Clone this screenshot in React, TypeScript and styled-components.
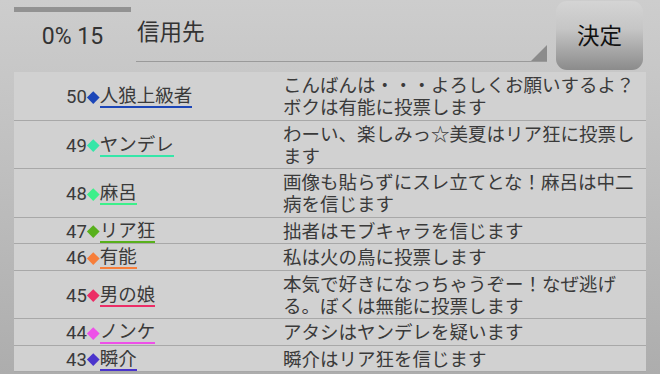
import React from "react";
import styled, { createGlobalStyle } from "styled-components";

const Global = createGlobalStyle`
  html, body {
    margin: 0;
    padding: 0;
    width: 660px;
    height: 374px;
    overflow: hidden;
  }
  body {
    background: linear-gradient(180deg, #cdcdcd 0%, #c4c4c4 30%, #adadad 100%);
    font-family: Roboto, "Noto Sans CJK JP", sans-serif;
    color: #333;
  }
`;

const Page = styled.div`
  width: 660px;
  height: 374px;
  padding: 0 14px;
  box-sizing: border-box;
  display: flex;
  flex-direction: column;
`;

const Header = styled.div`
  height: 72px;
  flex-shrink: 0;
  display: flex;
  align-items: stretch;
`;

const Counter = styled.div`
  width: 117px;
  display: flex;
  flex-direction: column;
  align-items: center;
  padding-top: 7px;
  box-sizing: border-box;
`;

const ProgressTrack = styled.div`
  align-self: stretch;
  height: 5px;
  background: #929292;
`;

const CounterText = styled.div`
  margin-top: 11px;
  font-size: 23px;
  line-height: 28px;
  color: #333;
`;

const InputBox = styled.div`
  position: relative;
  width: 411px;
  margin-left: 5px;
  height: 62px;
  border-bottom: 1.5px solid #9a9a9a;
  box-sizing: border-box;
  display: flex;
  align-items: flex-start;
  padding-left: 1px;
  padding-top: 16px;
`;

const InputText = styled.div`
  font-size: 22.5px;
  line-height: 32px;
  color: #333;
`;

const Corner = styled.div`
  position: absolute;
  right: 0;
  bottom: 0;
  width: 0;
  height: 0;
  border-left: 16px solid transparent;
  border-bottom: 16px solid #8b8b8b;
`;

const DecideButton = styled.button`
  margin-left: 9px;
  margin-top: 1px;
  width: 87px;
  height: 69px;
  border: none;
  border-radius: 11px;
  background: linear-gradient(180deg, #d4d4d4 0%, #c6c6c6 40%, #8b8b8b 100%);
  font-family: Roboto, "Noto Sans CJK JP", sans-serif;
  font-size: 22.5px;
  color: #111;
  padding: 0;
  padding-bottom: 3px;
`;

const List = styled.div`
  background: #d1d1d1;
  display: flex;
  flex-direction: column;
`;

const Row = styled.div`
  display: grid;
  grid-template-columns: 269px 1fr;
  padding: 3px 0 0.5px;
  border-bottom: 1px solid #a8a8a8;
`;

const Who = styled.div`
  display: flex;
  align-items: center;
  padding-left: 52px;
  font-size: 18.5px;
  color: #3a3a3a;
`;

const Num = styled.span`
  line-height: 20px;
`;

const Diamond = styled.span<{ $c: string }>`
  display: inline-flex;
  justify-content: center;
  align-items: center;
  width: 13px;
  height: 13px;
  &::before {
    content: "";
    width: 8.5px;
    height: 8.5px;
    background: ${(p) => p.$c};
    transform: rotate(45deg);
  }
`;

const Name = styled.span<{ $c: string }>`
  display: inline-block;
  line-height: 19px;
  margin-top: 1px;
  border-bottom: 2.5px solid ${(p) => p.$c};
  color: #3a3a3a;
`;

const Message = styled.div`
  font-size: 18.5px;
  line-height: 22px;
  color: #3a3a3a;
  padding-right: 6px;
`;

type Entry = { no: number; name: string; color: string; msg: string };

const entries: Entry[] = [
  { no: 50, name: "人狼上級者", color: "#1c46b8", msg: "こんばんは・・・よろしくお願いするよ？ボクは有能に投票します" },
  { no: 49, name: "ヤンデレ", color: "#35e6a8", msg: "わーい、楽しみっ☆美夏はリア狂に投票します" },
  { no: 48, name: "麻呂", color: "#3cf08a", msg: "画像も貼らずにスレ立てとな！麻呂は中二病を信じます" },
  { no: 47, name: "リア狂", color: "#58b01c", msg: "拙者はモブキャラを信じます" },
  { no: 46, name: "有能", color: "#f77e3a", msg: "私は火の鳥に投票します" },
  { no: 45, name: "男の娘", color: "#ec2d66", msg: "本気で好きになっちゃうぞー！なぜ逃げる。ぼくは無能に投票します" },
  { no: 44, name: "ノンケ", color: "#ee50e8", msg: "アタシはヤンデレを疑います" },
  { no: 43, name: "瞬介", color: "#4a34cc", msg: "瞬介はリア狂を信じます" },
];

export default function App() {
  return (
    <>
      <Global />
      <Page>
        <Header>
          <Counter>
            <ProgressTrack />
            <CounterText>0% 15</CounterText>
          </Counter>
          <InputBox>
            <InputText>信用先</InputText>
            <Corner />
          </InputBox>
          <DecideButton>決定</DecideButton>
        </Header>
        <List>
          {entries.map((e) => (
            <Row key={e.no}>
              <Who>
                <Num>{e.no}</Num>
                <Diamond $c={e.color} />
                <Name $c={e.color}>{e.name}</Name>
              </Who>
              <Message>{e.msg}</Message>
            </Row>
          ))}
        </List>
      </Page>
    </>
  );
}
